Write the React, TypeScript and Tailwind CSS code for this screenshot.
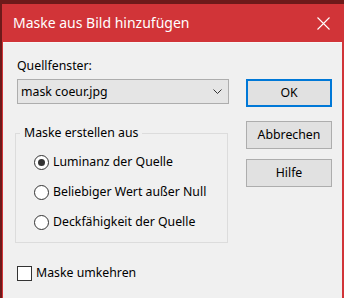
import { useState } from 'react'

const font = { fontFamily: '"Noto Sans", "Open Sans", sans-serif' }

function Radio({ checked, label, onClick }: { checked: boolean; label: string; onClick: () => void }) {
  return (
    <div className="flex items-center h-[30px] gap-[4px] cursor-default" onClick={onClick}>
      <div className="w-[15px] h-[15px] rounded-full border border-[#333] bg-white flex items-center justify-center">
        {checked && <div className="w-[7px] h-[7px] rounded-full bg-[#333]" />}
      </div>
      <span>{label}</span>
    </div>
  )
}

function Btn({ children, primary }: { children: string; primary?: boolean }) {
  return (
    <button
      className={
        'w-[86px] h-[28px] bg-[#e1e1e1] flex items-center justify-center text-black ' +
        (primary ? 'border-2 border-[#0078d7]' : 'border border-[#adadad]')
      }
    >
      {children}
    </button>
  )
}

export default function App() {
  const [mode, setMode] = useState(0)
  const options = ['Luminanz der Quelle', 'Beliebiger Wert außer Null', 'Deckfähigkeit der Quelle']

  return (
    <div className="w-[344px] h-[298px] bg-[#6d1a1a] pt-[4px] pl-[2px] flex flex-col overflow-hidden" style={font}>
      <div className="flex-1 flex flex-col bg-[#d13438] pl-px pr-[2px]">
        {/* Title bar */}
        <div className="h-[38px] flex items-center justify-between pl-[10px] pr-[12px] text-white text-[14px]">
          <span className="mt-[-1px]">Maske aus Bild hinzufügen</span>
          <svg width="13" height="13" viewBox="0 0 13 13" className="mt-[1px]">
            <path d="M0.5 0.5 L12.5 12.5 M12.5 0.5 L0.5 12.5" stroke="white" strokeWidth="1.1" />
          </svg>
        </div>

        {/* Body */}
        <div className="flex-1 bg-[#f0f0f0] border-t border-[#f7f7f7] flex pl-[14px] pt-[15px] text-[12.3px] text-black leading-[16px]">
          <div className="w-[212px] flex flex-col">
            <div className="h-[16px]">Quellfenster:</div>
            <div className="mt-[5px] h-[25px] bg-[#e5e5e5] border border-[#adadad] flex items-center justify-between pl-[3px] pr-[6px]">
              <span>mask coeur.jpg</span>
              <svg width="9" height="5" viewBox="0 0 9 5">
                <path d="M0.5 0.5 L4.5 4.5 L8.5 0.5" stroke="#333" strokeWidth="1" fill="none" />
              </svg>
            </div>

            <fieldset className="mt-[21px] ml-[-2px] w-[213px] border border-[#dcdcdc] pt-[6px] pb-[5px]">
              <legend className="ml-[4px] px-[4px] h-[16px]">Maske erstellen aus</legend>
              <div className="pl-[18px]">
                {options.map((o, i) => (
                  <Radio key={o} label={o} checked={mode === i} onClick={() => setMode(i)} />
                ))}
              </div>
            </fieldset>

            <div className="mt-[22px] flex items-center gap-[4px]">
              <div className="w-[15px] h-[15px] border border-[#333] bg-white" />
              <span>Maske umkehren</span>
            </div>
          </div>

          <div className="ml-[17px] pt-[21px] flex flex-col">
            <Btn primary>OK</Btn>
            <div className="mt-[14px]">
              <Btn>Abbrechen</Btn>
            </div>
            <div className="mt-[10px]">
              <Btn>Hilfe</Btn>
            </div>
          </div>
        </div>
      </div>
    </div>
  )
}
